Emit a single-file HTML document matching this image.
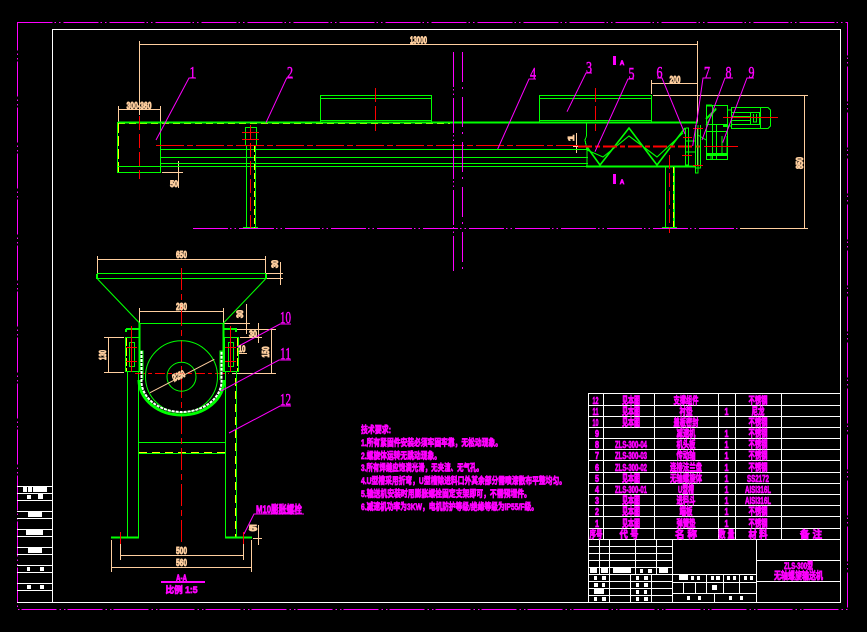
<!DOCTYPE html>
<html><head><meta charset="utf-8"><style>
html,body{margin:0;padding:0;background:#000;width:867px;height:632px;overflow:hidden}
svg{display:block}
text{font-family:"Liberation Sans","Noto Sans CJK SC",sans-serif;font-weight:bold}
.g{stroke:#0f0;fill:none}.t{stroke:#ffcf9f;fill:none}.m{stroke:#f0f;fill:none}.r{stroke:#f00;fill:none}.w{stroke:#fff;fill:none}.y{stroke:#ff0;fill:none}
.dd{stroke-dasharray:35 2 1.5 3 1.5 3}
.tt{fill:#ffcf9f;stroke:#ffcf9f;stroke-width:.9;text-anchor:middle}
.mt{fill:#f0f;stroke:#f0f;stroke-width:.75;text-anchor:middle}
.num{fill:#f0f;stroke:#f0f;stroke-width:.5;font-family:"Liberation Serif",serif;font-weight:normal;text-anchor:middle;font-size:17px}
</style></head><body>
<svg width="867" height="632" viewBox="0 0 867 632" xmlns="http://www.w3.org/2000/svg">
<rect width="867" height="632" fill="#000"/>
<!-- frames -->
<rect x="17.5" y="22.5" width="830" height="587" class="m dd" stroke-width="1"/>
<g shape-rendering="crispEdges">
<rect x="52.5" y="29.5" width="788" height="573" class="w"/>
<path class="w" d="M17 486.5H52M17 493.5H52M17 500.5H52M17 511.5H52M17 518.5H52M17 529.5H52M17 536.5H52M17 547.5H52M17 554.5H52M17 565.5H52M17 572.5H52M17 583.5H52M17 590.5H52M17 602.5H52"/>
<g fill="#fff">
<rect x="23" y="487" width="4" height="5"/><rect x="28" y="487" width="4" height="5"/><rect x="33" y="487" width="14" height="5"/>
<rect x="27" y="495" width="4" height="4"/><rect x="38" y="494" width="5" height="5"/>
<rect x="28" y="512" width="14" height="5"/><rect x="26" y="530" width="17" height="5"/><rect x="28" y="548" width="14" height="5"/>
<rect x="27" y="567" width="3" height="4"/><rect x="40" y="567" width="4" height="4"/>
<rect x="27" y="585" width="4" height="4"/><rect x="40" y="585" width="4" height="4"/>
</g>

<!-- top view: dims -->
<path class="t" d="M139.5 41V115M139.5 44.5H697.5M697.5 41V122M697.5 128V166"/>
<path class="t" d="M118.5 106V122M160.5 106V122M118.5 109.5H160.5"/>
<path class="t" d="M178.5 161V188M162 166.5H183M162 172.5H183"/>
<path class="t" d="M651.5 80V94M651.5 83.5H697M653 95.5H808M804.5 96V228M740 228.5H808M576.5 133V153M573 146.5H579"/>
<!-- top view: body -->
<path class="y" stroke-dasharray="7 4" d="M118 123.5H450"/>
<path class="g" stroke-width="2" d="M118 122.5H698"/>
<path class="y" stroke-dasharray="10 3" d="M118.5 123V172"/>
<path class="g" d="M117.5 122V172.5H160.5V122M117.5 166.5H160.5M160 149.5H588M160 157.5H588M160 163.5H588M160 166.5H588"/>
<path class="g" stroke-width="2" d="M586 166.5H696"/>
<path class="g" d="M586.5 123V136L585 140L587 150V166"/>
<path class="g" d="M320.5 122V95.5H431.5V122M320.5 98.5H431.5M320.5 120.5H431.5M539.5 122V95.5H651.5V122M539.5 98.5H651.5M539.5 120.5H651.5"/>
<!-- supports -->
<path class="g" d="M246.5 145V228M255.5 145V228M245.5 145.5V127.5H256.5V145.5H245.5M665.5 166V228"/>
<path class="g" stroke-width="2" d="M674 166V228M243 228H258M662 228H677"/>
<path class="y" stroke-dasharray="6 3" d="M254.5 146V228M673.5 167V228"/>
<path class="r" stroke-dasharray="14 4" d="M250.5 125V233M669.5 155V233M375.5 88V131M595.5 88V131M139.5 116V179"/>
<path class="r" d="M242 132.5H259M242 139.5H259"/>
<path class="r" stroke-dasharray="28 3 6 3" d="M156 145.5H578"/>
<!-- baseline and break lines -->
<path class="m dd" d="M193 228.5H740"/>
<path class="m dd" d="M453.5 52V272"/>
<path class="m" stroke-dasharray="30 5 2 8" d="M462.5 52V272"/>
<path class="m" stroke-width="3" d="M614.5 56V65M614.5 174V184"/>
</g>
<text x="622" y="65" class="mt" font-size="6">A</text>
<text x="622" y="184" class="mt" font-size="6">A</text>
<!-- auger -->
<path class="g" stroke-width="1.6" d="M587 147L600 165L629 128L657 165L685 128"/>
<path class="g" stroke-width="1.1" d="M587 150L603 157L629 136L657 157L683 133"/>
<path class="r" stroke-width="2" stroke-dasharray="14 3 5 3" d="M578 146.5H700"/>
<path class="r" d="M704 146.5H738"/>
<!-- drive -->
<g shape-rendering="crispEdges">
<path class="g" d="M685.5 128V165H688.5V128H685.5M685 141H696M685 152H696M695.5 125V173H698V125M700.5 125V168H696"/>
<path class="g" d="M706.5 105.5H727.5V159.5H706.5V105.5M712.5 105.5V159.5M716.5 124V159.5M706.5 124.5H727.5M706.5 131.5H727.5M706.5 153.5H727.5M711 154V159M722 136V155H727V136"/>
<path class="g" stroke-width="2" d="M706 105.5H712M706 155H727M723 126H727"/>
<path class="g" d="M731.5 107.5H760.5V128.5H731.5ZM760.5 107.5H768L770.5 110V126L768 128.5H760.5M731.5 112.5H760.5M731.5 116.5H750M731.5 120.5H750M731.5 124.5H760.5M750.5 112.5V124.5H759.5V112.5M753.5 114V122H756.5V114M727 110H731M727 126H731"/>
<path class="r" d="M723 117.5H778M704 146.5H738M693 128.5H703M683 137.5H692M682 155.5H692M693 165.5H703"/>
</g>
<path class="g" d="M698 135L706 140M706 125L716 108"/>
<path class="g" stroke-width="2" d="M706 119L716 109"/>
<!-- leaders -->
<path class="m" d="M156 140L189 78H196M266 122.7L286.7 78H293M497.7 149L529 79H536M567 111.7L586 73H592M595 151.7L628 79H634M657 78H662L685 134M711 78H703L698 113L692.7 146M733 78H725L702 140M754 78H747L722.7 142.7"/>
<text x="192.5" y="78" class="num" textLength="6" lengthAdjust="spacingAndGlyphs">1</text><text x="290" y="78" class="num" textLength="6" lengthAdjust="spacingAndGlyphs">2</text><text x="533" y="79" class="num" textLength="6" lengthAdjust="spacingAndGlyphs">4</text>
<text x="589" y="73" class="num" textLength="6" lengthAdjust="spacingAndGlyphs">3</text><text x="631.5" y="79" class="num" textLength="6" lengthAdjust="spacingAndGlyphs">5</text><text x="659.5" y="78" class="num" textLength="6" lengthAdjust="spacingAndGlyphs">6</text>
<text x="707" y="78" class="num" textLength="6" lengthAdjust="spacingAndGlyphs">7</text><text x="728.5" y="78" class="num" textLength="6" lengthAdjust="spacingAndGlyphs">8</text><text x="751.5" y="78" class="num" textLength="6" lengthAdjust="spacingAndGlyphs">9</text>
<text x="418.5" y="44.5" class="tt" font-size="10" textLength="17" lengthAdjust="spacingAndGlyphs" dy="-1">13000</text>
<text x="139" y="109" class="tt" font-size="10" textLength="25" lengthAdjust="spacingAndGlyphs">300-360</text>
<text x="174" y="187" class="tt" font-size="9" textLength="8" lengthAdjust="spacingAndGlyphs">50</text>
<text x="675" y="83" class="tt" font-size="10" textLength="11" lengthAdjust="spacingAndGlyphs">200</text>
<text x="0" y="0" class="tt" font-size="10" transform="translate(803,163) rotate(-90)" textLength="12" lengthAdjust="spacingAndGlyphs">850</text>
<text x="0" y="0" class="tt" font-size="8" transform="translate(574,138) rotate(-90)" textLength="6" lengthAdjust="spacingAndGlyphs">1</text>

<!-- section view -->
<g shape-rendering="crispEdges">
<path class="t" d="M97.5 256V275M265.5 256V273M97.5 259.5H265.5M266 273.5H283M266 278.5H283M280.5 262V285M139.5 308V323M223.5 308V323M139.5 311.5H223.5"/>
<path class="t" d="M224 323.5H250M224 329.5H260M246.5 304V334M258.5 323V343M240 337.5H262M108.5 337V372M104 337.5H124M104 372.5H124M240 329.5H276M232 373.5H276M271.5 329V373M238 353.5H247"/>
<path class="g" stroke-width="1" d="M97.5 273.5H265.5V278.5H97.5V273.5M139.5 323.5H223.5"/>
<path class="g" stroke-width="2" d="M126 329H139M224 329H237M126 329V332M236 329V332M139.5 323V372M223.5 323V372M97 274V279M266 274V279"/>
<path class="g" d="M125.5 337.5H139.5V371.5H125.5ZM224.5 337.5H238.5V371.5H224.5ZM129.5 342.5H134.5V366.5H129.5ZM228.5 342.5H233.5V366.5H228.5Z"/>
<path class="y" stroke-dasharray="8 2" d="M126.5 338V371M237.5 338V371"/>
<path class="r" d="M131.5 326V372M230.5 326V372M126 347.5H137M126 361.5H137M225 347.5H236M225 361.5H236"/>
<path class="g" d="M127.5 372V537M138.5 372V537M225.5 372V537M236.5 372V537M138.5 442.5H225.5M138.5 453.5H225.5"/>
<path class="y" stroke-width="1" stroke-dasharray="8 5" d="M139 452.5H225M235.5 378V537"/>
<path class="g" stroke-width="2" d="M111 537.5H139M225 537.5H252"/>
<path class="r" stroke-dasharray="22 4 6 4" d="M181.5 268V544"/>
<path class="r" d="M120.5 532V544M243.5 532V544"/>
<path class="r" stroke-dasharray="10 3 4 3" d="M135 373.5H229"/>
<path class="t" d="M120.5 544V560M243.5 544V560M120.5 555.5H243.5M111.5 540V572M251.5 540V572M111.5 567.5H251.5M258.5 525V545M253 538.5H262"/>
</g>
<path class="g" d="M97.5 279L139.5 323M265.5 279L223.5 323" stroke-width="1.1"/>
<circle cx="181.5" cy="376.7" r="36" class="g"/>
<circle cx="181.5" cy="376.7" r="14.5" class="g"/>
<path class="t" d="M150 392.7L214.3 359.3"/>
<path class="g" stroke-width="3" d="M139 380A42.5 35 0 0 0 224 380"/>
<path stroke="#0f0" fill="none" stroke-width="1" d="M140 351H143V380M220 380V351H223"/>
<path class="w" stroke-width="2" stroke-dasharray="3 1" d="M141.5 351V381A40 31 0 0 0 221.5 381V351"/>
<path class="m" d="M237 347L280 324H291M221 391L279 360H291M229 433L280 406H291M244 534L254 514H304"/>
<text x="285.5" y="323" class="num" textLength="11" lengthAdjust="spacingAndGlyphs">10</text><text x="285.5" y="359" class="num" textLength="11" lengthAdjust="spacingAndGlyphs">11</text><text x="285.5" y="405" class="num" textLength="11" lengthAdjust="spacingAndGlyphs">12</text>
<text x="181.5" y="258" class="tt" font-size="10" textLength="11" lengthAdjust="spacingAndGlyphs">650</text>
<text x="181.5" y="310" class="tt" font-size="10" textLength="11" lengthAdjust="spacingAndGlyphs">280</text>
<text x="0" y="0" class="tt" font-size="9" transform="translate(278,264) rotate(-90)" textLength="8" lengthAdjust="spacingAndGlyphs">30</text>
<text x="0" y="0" class="tt" font-size="9" transform="translate(243,314) rotate(-90)" textLength="8" lengthAdjust="spacingAndGlyphs">30</text>
<text x="253" y="337" class="tt" font-size="9" textLength="8" lengthAdjust="spacingAndGlyphs">30</text>
<text x="242" y="352" class="tt" font-size="9" textLength="7" lengthAdjust="spacingAndGlyphs">10</text>
<text x="0" y="0" class="tt" font-size="10" transform="translate(106,355) rotate(-90)" textLength="10" lengthAdjust="spacingAndGlyphs">130</text>
<text x="0" y="0" class="tt" font-size="10" transform="translate(269,352) rotate(-90)" textLength="11" lengthAdjust="spacingAndGlyphs">150</text>
<text x="0" y="0" class="tt" font-size="10" transform="translate(180,379) rotate(-24)" textLength="13" lengthAdjust="spacingAndGlyphs">Ø250</text>
<text x="181.5" y="554" class="tt" font-size="10" textLength="11" lengthAdjust="spacingAndGlyphs">500</text>
<text x="181.5" y="566" class="tt" font-size="10" textLength="11" lengthAdjust="spacingAndGlyphs">560</text>
<text x="253" y="531" class="tt" font-size="8" textLength="8" lengthAdjust="spacingAndGlyphs">5</text>
<path class="m" stroke-width="2" d="M161 582H205" shape-rendering="crispEdges"/>
<text x="181.5" y="581" class="mt" font-size="9" textLength="11" lengthAdjust="spacingAndGlyphs">A-A</text>
<text x="181.5" y="593" class="mt" font-size="9" textLength="32" lengthAdjust="spacingAndGlyphs">比例 1:5</text>
<text x="279" y="513" class="mt" font-size="11" textLength="46" lengthAdjust="spacingAndGlyphs">M10膨胀螺栓</text>

<!-- tech notes -->
<g class="mt" font-size="9.5">
<text x="361" y="433" style="text-anchor:start" textLength="30" lengthAdjust="spacingAndGlyphs">技术要求:</text>
<text x="361" y="446" style="text-anchor:start" textLength="141" lengthAdjust="spacingAndGlyphs">1.所有紧固件安装必须牢固牢靠，无松动现象。</text>
<text x="361" y="459" style="text-anchor:start" textLength="80" lengthAdjust="spacingAndGlyphs">2.螺旋体运转无跳动现象。</text>
<text x="361" y="471" style="text-anchor:start" textLength="122" lengthAdjust="spacingAndGlyphs">3.所有焊缝应饱满光滑，无夹渣、无气孔。</text>
<text x="361" y="484" style="text-anchor:start" textLength="205" lengthAdjust="spacingAndGlyphs">4.U型槽采用折弯，U型槽除进料口外其余部分需喷漆散布平整均匀。</text>
<text x="361" y="497" style="text-anchor:start" textLength="170" lengthAdjust="spacingAndGlyphs">5.输送机安装时用膨胀螺栓固定支架即可，不需预埋件。</text>
<text x="361" y="510" style="text-anchor:start" textLength="177" lengthAdjust="spacingAndGlyphs">6.减速机功率为3KW，电机防护等级/绝缘等级为IP55/F级。</text>
</g>

<!-- BOM -->
<g shape-rendering="crispEdges">
<path class="w" d="M588.5 393.5H840.5M588.5 405.5H840M588.5 416.5H840M588.5 427.5H840M588.5 438.5H840M588.5 449.5H840M588.5 460.5H840M588.5 472.5H840M588.5 483.5H840M588.5 494.5H840M588.5 505.5H840M588.5 516.5H840M588.5 528.5H840M588.5 539.5H840"/>
<path class="w" d="M588.5 393V602M603.5 393V539M654.5 393V539M718.5 393V539M735.5 393V539M781.5 393V539"/>
<!-- title block -->
<path class="w" d="M672.5 539V602M756.5 539V602M756.5 560.5H840M756.5 581.5H840M588.5 602.5H840"/>
<path class="w" d="M588.5 546.5H672M588.5 553.5H672M588.5 560.5H672M588.5 567.5H672M588.5 574.5H672M588.5 581.5H672M588.5 588.5H672M588.5 595.5H672M599.5 539V574M609.5 539V602M635.5 539V574M656.5 539V574M630.5 574V602M651.5 574V602"/>
<path class="w" d="M672.5 574.5H756M672.5 582.5H756M672.5 593.5H756M706.5 574V593M723.5 574V593M739.5 574V593M683.5 582V593M695.5 582V593M714.5 593V602"/>
<g fill="#fff">
<rect x="590" y="568" width="7" height="5"/><rect x="601" y="568" width="7" height="5"/><rect x="613" y="568" width="18" height="5"/><rect x="640" y="569" width="3" height="4"/><rect x="648" y="569" width="4" height="4"/><rect x="659" y="568" width="9" height="5"/>
<rect x="594" y="576" width="3" height="4"/><rect x="602" y="576" width="4" height="4"/><rect x="636" y="576" width="3" height="4"/><rect x="644" y="576" width="4" height="4"/>
<rect x="594" y="583" width="4" height="4"/><rect x="602" y="583" width="3" height="4"/><rect x="636" y="583" width="3" height="4"/><rect x="644" y="583" width="4" height="4"/>
<rect x="594" y="589" width="10" height="5"/><rect x="636" y="590" width="3" height="4"/><rect x="644" y="590" width="3" height="4"/>
<rect x="594" y="597" width="3" height="4"/><rect x="602" y="597" width="4" height="4"/><rect x="636" y="597" width="3" height="4"/><rect x="644" y="597" width="4" height="4"/>
<rect x="679" y="575" width="9" height="5"/><rect x="691" y="576" width="3" height="4"/><rect x="697" y="576" width="3" height="4"/><rect x="711" y="576" width="3" height="4"/><rect x="716" y="576" width="4" height="4"/><rect x="727" y="576" width="3" height="4"/><rect x="733" y="576" width="3" height="4"/><rect x="744" y="576" width="3" height="4"/><rect x="750" y="576" width="3" height="4"/>
<rect x="712" y="585" width="5" height="5"/>
<rect x="687" y="596" width="3" height="4"/><rect x="698" y="596" width="3" height="4"/><rect x="729" y="596" width="3" height="4"/><rect x="740" y="596" width="3" height="4"/>
</g>
</g>
<g font-size="10">
<text x="595.5" y="404" class="mt" textLength="6" lengthAdjust="spacingAndGlyphs">12</text><text x="631" y="404" class="mt" textLength="18" lengthAdjust="spacingAndGlyphs">见本图</text><text x="686" y="404" class="mt" textLength="25" lengthAdjust="spacingAndGlyphs">支撑组件</text><text x="758" y="404" class="mt" textLength="19" lengthAdjust="spacingAndGlyphs">不锈钢</text>
<text x="595.5" y="415" class="mt" textLength="6" lengthAdjust="spacingAndGlyphs">11</text><text x="631" y="415" class="mt" textLength="18" lengthAdjust="spacingAndGlyphs">见本图</text><text x="686" y="415" class="mt" textLength="13" lengthAdjust="spacingAndGlyphs">衬垫</text><text x="726.5" y="415" class="mt" textLength="4" lengthAdjust="spacingAndGlyphs">1</text><text x="758" y="415" class="mt" textLength="13" lengthAdjust="spacingAndGlyphs">尼龙</text>
<text x="595.5" y="426" class="mt" textLength="6" lengthAdjust="spacingAndGlyphs">10</text><text x="631" y="426" class="mt" textLength="18" lengthAdjust="spacingAndGlyphs">见本图</text><text x="686" y="426" class="mt" textLength="25" lengthAdjust="spacingAndGlyphs">盖板密封</text><text x="758" y="426" class="mt" textLength="19" lengthAdjust="spacingAndGlyphs">不锈钢</text>
<text x="597" y="437" class="mt" textLength="4" lengthAdjust="spacingAndGlyphs">9</text><text x="686" y="437" class="mt" textLength="19" lengthAdjust="spacingAndGlyphs">减速机</text><text x="726.5" y="437" class="mt" textLength="4" lengthAdjust="spacingAndGlyphs">1</text><text x="758" y="437" class="mt" textLength="19" lengthAdjust="spacingAndGlyphs">不锈钢</text>
<text x="597" y="448" class="mt" textLength="4" lengthAdjust="spacingAndGlyphs">8</text><text x="631" y="448" class="mt" textLength="32" lengthAdjust="spacingAndGlyphs">ZLS-300-04</text><text x="686" y="448" class="mt" textLength="19" lengthAdjust="spacingAndGlyphs">机头板</text><text x="726.5" y="448" class="mt" textLength="4" lengthAdjust="spacingAndGlyphs">1</text><text x="758" y="448" class="mt" textLength="19" lengthAdjust="spacingAndGlyphs">不锈钢</text>
<text x="597" y="459" class="mt" textLength="4" lengthAdjust="spacingAndGlyphs">7</text><text x="631" y="459" class="mt" textLength="32" lengthAdjust="spacingAndGlyphs">ZLS-300-03</text><text x="686" y="459" class="mt" textLength="19" lengthAdjust="spacingAndGlyphs">传动轴</text><text x="726.5" y="459" class="mt" textLength="4" lengthAdjust="spacingAndGlyphs">1</text><text x="758" y="459" class="mt" textLength="19" lengthAdjust="spacingAndGlyphs">不锈钢</text>
<text x="597" y="471" class="mt" textLength="4" lengthAdjust="spacingAndGlyphs">6</text><text x="631" y="471" class="mt" textLength="32" lengthAdjust="spacingAndGlyphs">ZLS-300-02</text><text x="686" y="471" class="mt" textLength="32" lengthAdjust="spacingAndGlyphs">连接法兰盘</text><text x="726.5" y="471" class="mt" textLength="4" lengthAdjust="spacingAndGlyphs">1</text><text x="758" y="471" class="mt" textLength="19" lengthAdjust="spacingAndGlyphs">不锈钢</text>
<text x="597" y="482" class="mt" textLength="4" lengthAdjust="spacingAndGlyphs">5</text><text x="631" y="482" class="mt" textLength="18" lengthAdjust="spacingAndGlyphs">见本图</text><text x="686" y="482" class="mt" textLength="32" lengthAdjust="spacingAndGlyphs">无轴螺旋体</text><text x="726.5" y="482" class="mt" textLength="4" lengthAdjust="spacingAndGlyphs">1</text><text x="758" y="482" class="mt" textLength="22" lengthAdjust="spacingAndGlyphs">SS2172</text>
<text x="597" y="493" class="mt" textLength="4" lengthAdjust="spacingAndGlyphs">4</text><text x="631" y="493" class="mt" textLength="32" lengthAdjust="spacingAndGlyphs">ZLS-300-01</text><text x="686" y="493" class="mt" textLength="16" lengthAdjust="spacingAndGlyphs">U型槽</text><text x="726.5" y="493" class="mt" textLength="4" lengthAdjust="spacingAndGlyphs">1</text><text x="758" y="493" class="mt" textLength="26" lengthAdjust="spacingAndGlyphs">AISI316L</text>
<text x="597" y="504" class="mt" textLength="4" lengthAdjust="spacingAndGlyphs">3</text><text x="631" y="504" class="mt" textLength="18" lengthAdjust="spacingAndGlyphs">见本图</text><text x="686" y="504" class="mt" textLength="19" lengthAdjust="spacingAndGlyphs">进料斗</text><text x="726.5" y="504" class="mt" textLength="4" lengthAdjust="spacingAndGlyphs">1</text><text x="758" y="504" class="mt" textLength="26" lengthAdjust="spacingAndGlyphs">AISI316L</text>
<text x="597" y="515" class="mt" textLength="4" lengthAdjust="spacingAndGlyphs">2</text><text x="631" y="515" class="mt" textLength="18" lengthAdjust="spacingAndGlyphs">见本图</text><text x="686" y="515" class="mt" textLength="13" lengthAdjust="spacingAndGlyphs">端板</text><text x="726.5" y="515" class="mt" textLength="4" lengthAdjust="spacingAndGlyphs">1</text><text x="758" y="515" class="mt" textLength="19" lengthAdjust="spacingAndGlyphs">不锈钢</text>
<text x="597" y="527" class="mt" textLength="4" lengthAdjust="spacingAndGlyphs">1</text><text x="631" y="527" class="mt" textLength="18" lengthAdjust="spacingAndGlyphs">见本图</text><text x="686" y="527" class="mt" textLength="19" lengthAdjust="spacingAndGlyphs">弹簧垫</text><text x="726.5" y="527" class="mt" textLength="4" lengthAdjust="spacingAndGlyphs">1</text><text x="758" y="527" class="mt" textLength="19" lengthAdjust="spacingAndGlyphs">不锈钢</text>
<text x="596" y="538" class="mt" textLength="13" lengthAdjust="spacingAndGlyphs">序号</text><text x="629" y="538" class="mt" textLength="19" lengthAdjust="spacingAndGlyphs">代 号</text><text x="686" y="538" class="mt" textLength="22" lengthAdjust="spacingAndGlyphs">名 称</text><text x="726.5" y="538" class="mt" textLength="16" lengthAdjust="spacingAndGlyphs">数 量</text><text x="758" y="538" class="mt" textLength="19" lengthAdjust="spacingAndGlyphs">材 料</text><text x="811" y="538" class="mt" textLength="22" lengthAdjust="spacingAndGlyphs">备 注</text>
</g>
<text x="798.5" y="569" class="mt" font-size="9.5" textLength="29" lengthAdjust="spacingAndGlyphs">ZLS-300型</text>
<text x="798.5" y="579" class="mt" font-size="10.5" textLength="49" lengthAdjust="spacingAndGlyphs">无轴螺旋输送机</text>
</svg>
</body></html>
